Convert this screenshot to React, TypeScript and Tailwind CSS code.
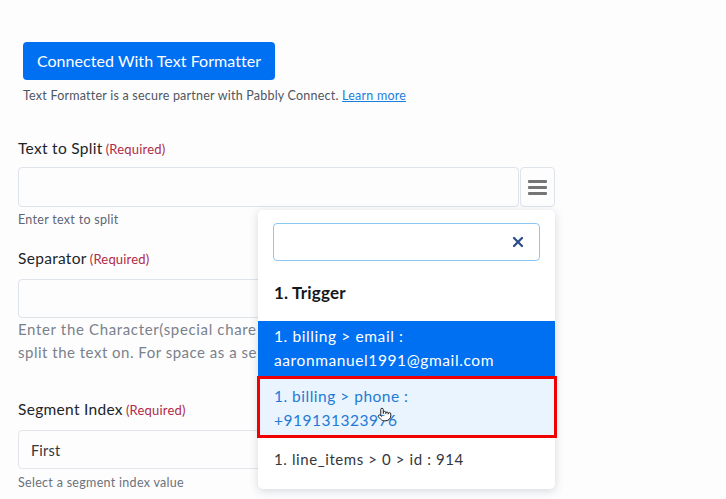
import React from "react";
import { X, Pointer } from "lucide-react";

function Label({ name, mt }: { name: string; mt: string }) {
  return (
    <div className={`${mt} flex items-baseline h-[22px] leading-[22px]`}>
      <span className="text-[15.5px] tracking-[0.3px] text-[#212529]">{name}</span>
      <span className="ml-[3px] text-[13px] tracking-[0.2px] text-[#b02a47]">(Required)</span>
    </div>
  );
}

export default function App() {
  return (
    <div className="relative w-[726px] h-[499px] overflow-hidden bg-[#fdfdfe] font-['Lato','Liberation_Sans',sans-serif]">
      <div className="flex flex-col w-[537px] ml-[18px] pt-[42px]">
        <div className="ml-[5px] w-[252px] h-[38px] rounded-[4px] bg-[#0070f3] text-white text-[16px] tracking-[0.05px] flex items-center justify-center">
          Connected With Text Formatter
        </div>
        <p className="ml-[5px] mt-[7px] h-[18px] leading-[18px] text-[12.5px] tracking-[0.22px] text-[#4f5660] whitespace-nowrap">
          Text Formatter is a secure partner with Pabbly Connect.{" "}
          <span className="text-[#1a7fe0] underline">Learn more</span>
        </p>
        <Label name="Text to Split" mt="mt-[32px]" />
        <div className="mt-[8px] flex gap-px h-[40px]">
          <div className="flex-1 rounded-[4px] border border-[#dfe3ea] bg-[#fdfdfe]" />
          <div className="w-[35px] rounded-[4px] border border-[#dfe3ea] flex flex-col items-center justify-center gap-[3px]">
            <span className="block w-[19px] h-[3px] bg-[#757575] rounded-[1px]" />
            <span className="block w-[19px] h-[3px] bg-[#757575] rounded-[1px]" />
            <span className="block w-[19px] h-[3px] bg-[#757575] rounded-[1px]" />
          </div>
        </div>
        <p className="mt-[4px] h-[18px] leading-[18px] text-[12.5px] tracking-[0.3px] text-[#5f6670]">Enter text to split</p>
        <Label name="Separator" mt="mt-[18px]" />
        <div className="mt-[10px] h-[39px] rounded-[4px] border border-[#dfe3ea] bg-[#fdfdfe]" />
        <p className="text-[15px] leading-[23px] tracking-[0.5px] text-[#7a818b] whitespace-nowrap">
          <span className="tracking-[0.65px]">Enter the Character(special chare</span><br />
          split the text on. For space as a se
        </p>
        <Label name="Segment Index" mt="mt-[34px]" />
        <div className="mt-[10px] h-[39px] rounded-[4px] border border-[#e2e5ea] bg-[#fdfdfe] pl-[12px] pt-[3px] flex items-center text-[14.5px] tracking-[0.2px] text-[#33373d]">
          First
        </div>
        <p className="mt-[5px] h-[18px] leading-[18px] text-[12.5px] tracking-[0.3px] text-[#6b7179]">Select a segment index value</p>
      </div>

      <div className="absolute left-[258px] top-[210px] w-[297px] h-[279px] rounded-[5px] bg-white shadow-[0_2px_10px_rgba(60,70,90,0.2)] flex flex-col">
        <div className="mx-[15px] mt-[13px] h-[38px] rounded-[4px] border border-[#8cc6f2] bg-white flex items-center justify-end pr-[13px]">
          <X size={16} strokeWidth={3.5} className="text-[#2f4f8a]" />
        </div>
        <div className="mt-[20px] ml-[16px] h-[24px] leading-[24px] text-[17px] font-bold tracking-[0.2px] text-[#15181c]">1. Trigger</div>
        <div className="mt-[16px] h-[55px] bg-[#0070f3] text-white text-[15.5px] leading-[23.5px] tracking-[0.6px] pl-[16px] pt-[4px]">
          1. billing &gt; email :<br />aaronmanuel1991@gmail.com
        </div>
        <div className="h-[61px] bg-[#e9f4fe] text-[#1f7ad6] text-[15.5px] leading-[23.5px] tracking-[0.5px] pl-[16px] pt-[9px]">
          1. billing &gt; phone :<br />+919131323976
        </div>
        <div className="mt-[10px] ml-[16px] h-[24px] leading-[24px] text-[15px] tracking-[0.6px] text-[#33373d]">1. line_items &gt; 0 &gt; id : 914</div>
      </div>

      <div className="absolute left-[257px] top-[376px] w-[300px] h-[62px] border-[3px] border-[#f00000]" />
      <Pointer size={15} strokeWidth={1.6} fill="white" className="absolute left-[377px] top-[407px] text-[#222]" />
    </div>
  );
}
